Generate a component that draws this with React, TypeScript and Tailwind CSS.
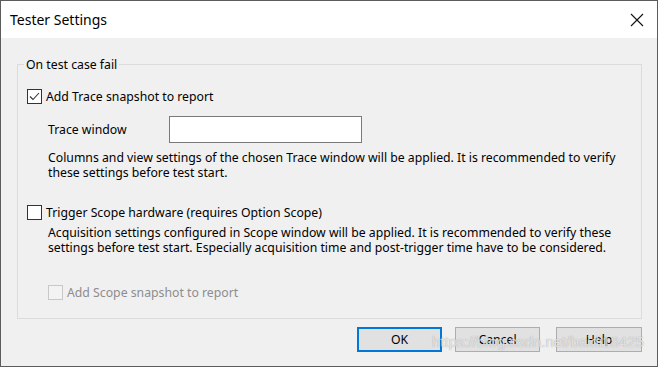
import React from "react";

const font = { fontFamily: '"Noto Sans", "Open Sans", sans-serif' };

function CheckBox({ checked, disabled }: { checked?: boolean; disabled?: boolean }) {
  return (
    <div
      className={
        "w-[15px] h-[15px] shrink-0 border flex items-center justify-center " +
        (disabled ? "border-[#c8c8c8] bg-[#f3f3f3]" : "border-[#333333] bg-white")
      }
    >
      {checked && (
        <svg width="13" height="13" viewBox="0 0 13 13">
          <path d="M2 6.5 L5 9.5 L11 3" fill="none" stroke="#333" strokeWidth="1.1" />
        </svg>
      )}
    </div>
  );
}

export default function App() {
  return (
    <div
      className="relative w-[658px] h-[367px] flex flex-col border border-[#5c5c5c] bg-[#f0f0f0] text-black text-[12.25px] leading-[15px] overflow-hidden"
      style={font}
    >
      <div className="h-[37px] bg-white flex items-center justify-between pl-[9px] pr-[13px]">
        <span className="text-[14px]">Tester Settings</span>
        <svg width="14" height="14" viewBox="0 0 14 14">
          <path d="M1 1 L13 13 M13 1 L1 13" stroke="#111" strokeWidth="1.1" fill="none" />
        </svg>
      </div>
      <div className="flex-1 flex flex-col pl-[16px] pr-[15px] pt-[19px]">
        <fieldset className="h-[262px] border border-[#dcdcdc] px-[9px] flex flex-col">
          <legend className="ml-[-3px] px-[2px] leading-[15px]">On test case fail</legend>
          <div className="mt-[16px] h-[16px] flex items-center">
            <CheckBox checked />
            <span className="ml-[4px]">Add Trace snapshot to report</span>
          </div>
          <div className="mt-[12px] flex items-center pl-[21px]">
            <span className="w-[121px]">Trace window</span>
            <div className="w-[193px] h-[27px] bg-white border border-[#7a7a7a]" />
          </div>
          <div className="mt-[7px] pl-[21px] whitespace-nowrap">
            <div>Columns and view settings of the chosen Trace window will be applied. It is recommended to verify</div>
            <div>these settings before test start.</div>
          </div>
          <div className="mt-[24px] h-[16px] flex items-center">
            <CheckBox />
            <span className="ml-[4px]">Trigger Scope hardware (requires Option Scope)</span>
          </div>
          <div className="mt-[5px] pl-[21px] whitespace-nowrap">
            <div>Acquisition settings configured in Scope window will be applied. It is recommended to verify these</div>
            <div>settings before test start. Especially acquisition time and post-trigger time have to be considered.</div>
          </div>
          <div className="mt-[29px] h-[16px] flex items-center pl-[21px]">
            <CheckBox disabled />
            <span className="ml-[4px] text-[#8d8d8d]">Add Scope snapshot to report</span>
          </div>
        </fieldset>
        <div className="mt-[8px] flex justify-end">
          <button className="w-[85px] h-[25px] mr-[13px] bg-[#e1e1e1] border-2 border-[#0078d7]">OK</button>
          <button className="w-[85px] h-[25px] mr-[16px] bg-[#e1e1e1] border border-[#adadad]">Cancel</button>
          <button className="w-[86px] h-[25px] bg-[#e1e1e1] border border-[#adadad]">Help</button>
        </div>
      </div>
      <div
        className="absolute left-[431px] top-[331px] text-[15px] leading-[20px] text-white/70 whitespace-nowrap pointer-events-none"
        style={{ fontFamily: '"Liberation Sans", Arial, sans-serif', textShadow: "0 0 1px rgba(110,110,110,0.7)" }}
      >
        https://blog.csdn.net/baidi18425
      </div>
    </div>
  );
}
